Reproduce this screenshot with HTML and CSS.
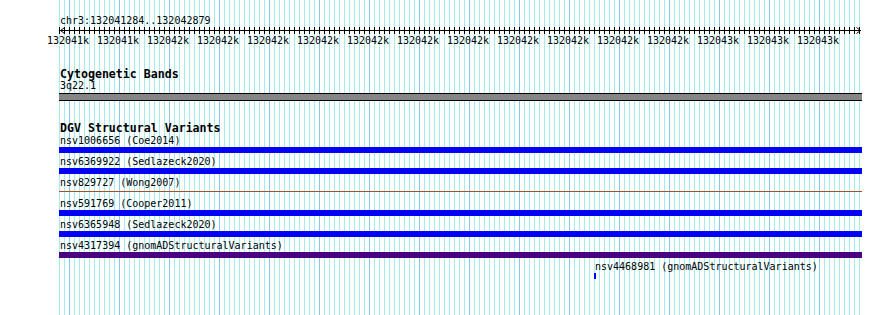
FILE: index.html
```html
<!DOCTYPE html>
<html lang="en">

<head>
  <meta charset="UTF-8">
  <meta name="viewport" content="width=device-width, initial-scale=1.0">
  <title>chr3:132041284..132042879</title>
  <link rel="stylesheet" href="styles.css">
</head>

<body>
  <div class="browser">
    <!-- Location and ruler -->
    <div class="location">chr3:132041284..132042879</div>
    <svg class="ruler" width="803" height="8" viewBox="0 0 803 8" shape-rendering="crispEdges">
      <defs>
        <pattern id="ticks" width="5" height="8" patternUnits="userSpaceOnUse">
          <rect x="0" y="1" width="1" height="7" fill="#000" />
        </pattern>
      </defs>
      <rect x="1" y="4" width="801" height="1" fill="#000" />
      <rect x="0" y="0" width="801" height="8" fill="url(#ticks)" />
      <path d="M1.5 4.5 L5.5 1.5 M1.5 4.5 L5.5 7.5 M801.5 4.5 L797.5 1.5 M801.5 4.5 L797.5 7.5" stroke="#000" stroke-width="1" fill="none" shape-rendering="auto" />
    </svg>
    <div class="scale">
      <span>132041k</span>
      <span>132041k</span>
      <span>132042k</span>
      <span>132042k</span>
      <span>132042k</span>
      <span>132042k</span>
      <span>132042k</span>
      <span>132042k</span>
      <span>132042k</span>
      <span>132042k</span>
      <span>132042k</span>
      <span>132042k</span>
      <span>132042k</span>
      <span>132043k</span>
      <span>132043k</span>
      <span>132043k</span>
    </div>

    <!-- Cytogenetic bands -->
    <div class="track cyto">
      <h2 class="track-title">Cytogenetic Bands</h2>
      <div class="feature-label">3q22.1</div>
      <div class="band"></div>
    </div>

    <!-- DGV structural variants -->
    <div class="track dgv">
      <h2 class="track-title">DGV Structural Variants</h2>
      <div class="feature">
        <div class="feature-label">nsv1006656 (Coe2014)</div>
        <div class="bar"></div>
      </div>
      <div class="feature">
        <div class="feature-label">nsv6369922 (Sedlazeck2020)</div>
        <div class="bar"></div>
      </div>
      <div class="feature">
        <div class="feature-label">nsv829727 (Wong2007)</div>
        <div class="bar bar-thin"></div>
      </div>
      <div class="feature">
        <div class="feature-label">nsv591769 (Cooper2011)</div>
        <div class="bar"></div>
      </div>
      <div class="feature">
        <div class="feature-label">nsv6365948 (Sedlazeck2020)</div>
        <div class="bar"></div>
      </div>
      <div class="feature">
        <div class="feature-label">nsv4317394 (gnomADStructuralVariants)</div>
        <div class="bar bar-gnomad"></div>
      </div>
      <div class="feature" style="margin-left: 535px;">
        <div class="feature-label">nsv4468981 (gnomADStructuralVariants)</div>
        <div class="bar" style="width: 2px;"></div>
      </div>
    </div>
  </div>
</body>

</html>
```

FILE: styles.css
```css
/* General */
body {
  margin: 0;
  padding: 0;
  font-family: 'DejaVu Sans Mono', monospace;
  font-size: 10px;
  color: #000;
  background-color: #fff;
}

/* View with grid lines */
.browser {
  box-sizing: border-box;
  min-height: 315px;
  padding: 16px 0 0 59px;
  background-image:
    repeating-linear-gradient(to right, #88c8f0 0 1px, transparent 1px 50px),
    repeating-linear-gradient(to right, #a4ecf0 0 1px, transparent 1px 5px);
  background-position: 69px 0, 59px 0;
  background-size: 751px 100%, 801px 100%;
  background-repeat: no-repeat;
}

.location {
  height: 10px;
  line-height: 10px;
  padding-left: 1px;
}

.ruler {
  display: block;
}

.scale {
  display: flex;
  margin: 2px 0 0 -16px;
  line-height: 10px;
}

.scale span {
  flex: 0 0 50px;
  text-align: center;
}

/* Tracks */
.track {
  width: 803px;
}

.track-title {
  margin: 0;
  padding-left: 1px;
  font-size: 11.6px;
  line-height: 12px;
  font-weight: bold;
}

.feature-label {
  height: 10px;
  line-height: 10px;
  padding-left: 1px;
  white-space: nowrap;
}

.cyto {
  margin-top: 22px;
}

.cyto .feature-label {
  margin-top: 1px;
}

.band {
  margin-top: 2px;
  height: 6px;
  background-color: #868686;
  border-top: 1px solid #000;
  border-bottom: 1px solid #000;
}

.dgv {
  margin-top: 21px;
}

.dgv .track-title {
  margin-bottom: 2px;
}

.feature {
  height: 21px;
}

.bar {
  margin-top: 1px;
  height: 6px;
  background-color: #0000f5;
}

.bar-thin {
  margin-top: 3px;
  height: 1px;
  background-color: #a0522d;
}

.bar-gnomad {
  background-color: #4b0082;
}
```
